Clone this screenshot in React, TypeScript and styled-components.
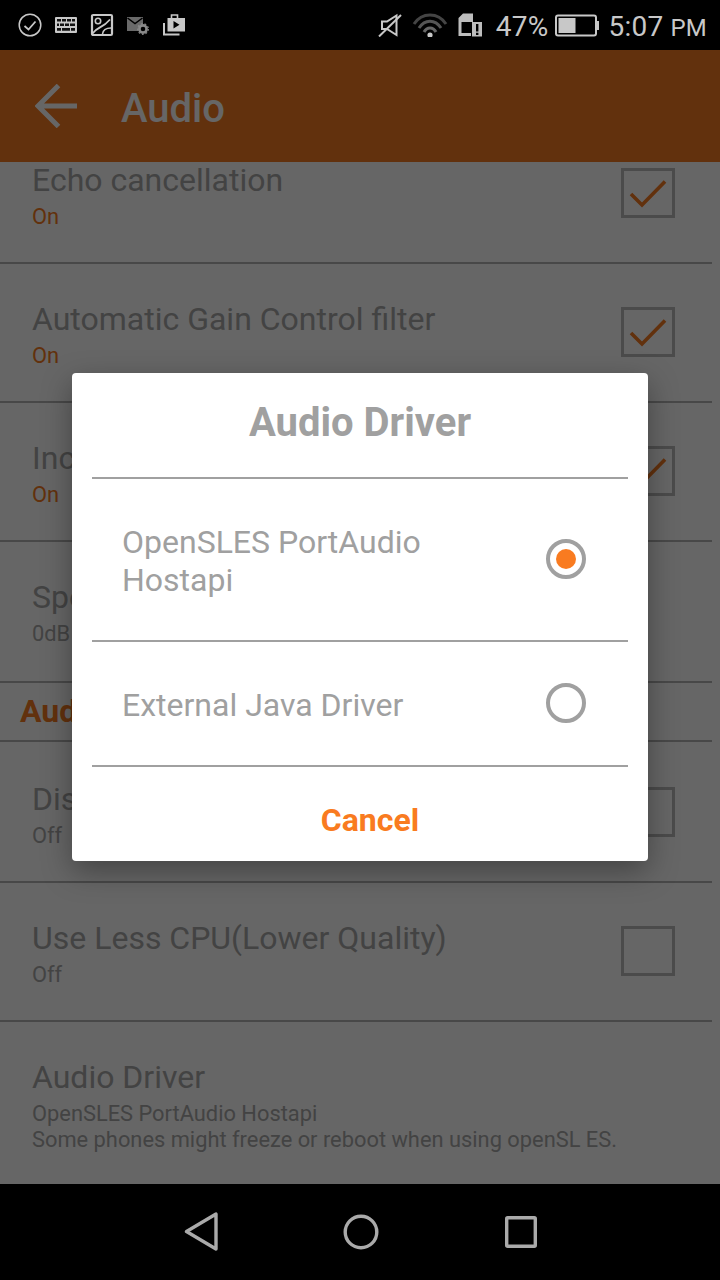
import React from "react";
import styled, { createGlobalStyle } from "styled-components";

const Global = createGlobalStyle`
  html, body { margin: 0; padding: 0; background: #000; }
  body { font-family: Roboto, "Liberation Sans", sans-serif; }
  * { box-sizing: border-box; }
`;

const Screen = styled.div`
  width: 720px;
  height: 1280px;
  display: flex;
  flex-direction: column;
  overflow: hidden;
  background: #000;
`;

const StatusBar = styled.div`
  height: 50px;
  flex: none;
  display: flex;
  align-items: center;
  justify-content: space-between;
  padding: 0 13px 0 18px;
  background: #000;
  color: #c8c8c8;
`;

const StatusGroup = styled.div<{ $gap: number }>`
  display: flex;
  align-items: center;
  gap: ${(p) => p.$gap}px;
`;

const Percent = styled.span`
  font-size: 28px;
  line-height: 32px;
  letter-spacing: 0.3px;
  margin: 4px -5px 0 4px;
`;

const Clock = styled.span`
  font-size: 28px;
  line-height: 32px;
  letter-spacing: 0.2px;
  margin-top: 4px;
  small { font-size: 24px; }
`;

const Content = styled.div`
  position: relative;
  flex: 1;
  display: flex;
  flex-direction: column;
  min-height: 0;
  background: #fff;
`;

const AppBar = styled.div`
  height: 112px;
  flex: none;
  display: flex;
  align-items: center;
  gap: 44px;
  padding: 0 0 0 35px;
  background: #f57a22;
  color: #fff;
`;

const AppTitle = styled.div`
  font-size: 40px;
  font-weight: 500;
  padding-top: 4px;
`;

const ListViewport = styled.div`
  flex: 1;
  min-height: 0;
  overflow: hidden;
`;

const List = styled.div`
  margin-top: -37px;
  width: 712px;
`;

const Row = styled.div<{ $height: number; $top?: number }>`
  height: ${(p) => p.$height}px;
  border-bottom: 2px solid #b4b4b4;
  padding: ${(p) => p.$top ?? 36}px 37px 0 32px;
  display: flex;
  justify-content: space-between;
`;

const RowText = styled.div`
  display: flex;
  flex-direction: column;
  gap: 5px;
`;

const RowTitle = styled.div`
  font-size: 32px;
  line-height: 38px;
  color: #a8a8a8;
`;

const RowSummary = styled.div<{ $on?: boolean }>`
  font-size: 21.85px;
  line-height: 26px;
  color: ${(p) => (p.$on ? "#f57a22" : "#a8a8a8")};
`;

const CheckBox = styled.div`
  width: 54px;
  height: 50px;
  margin-top: 7px;
  border: 3px solid #bcbcbc;
  flex: none;
  svg { display: block; margin: -3px; }
`;

const Section = styled.div`
  height: 59px;
  border-bottom: 2px solid #b4b4b4;
  padding: 9px 0 0 20px;
  font-size: 32px;
  line-height: 38px;
  font-weight: 700;
  color: #f57a22;
`;

const Scrim = styled.div`
  position: absolute;
  inset: 0;
  display: flex;
  align-items: center;
  justify-content: center;
  background: rgba(0, 0, 0, 0.6);
`;

const Dialog = styled.div`
  width: 576px;
  height: 488px;
  background: #fff;
  border-radius: 4px;
  padding: 0 20px;
  display: flex;
  flex-direction: column;
  box-shadow: 0 10px 30px rgba(0, 0, 0, 0.35);
`;

const DialogTitle = styled.div`
  height: 106px;
  flex: none;
  display: flex;
  align-items: center;
  justify-content: center;
  padding-bottom: 5px;
  border-bottom: 2px solid #a0a0a0;
  font-size: 40px;
  font-weight: 700;
  color: #a0a0a0;
`;

const Option = styled.div<{ $height: number }>`
  height: ${(p) => p.$height}px;
  flex: none;
  display: flex;
  align-items: center;
  justify-content: space-between;
  padding: 0 42px 0 30px;
  border-bottom: 2px solid #a0a0a0;
`;

const OptionLabel = styled.div`
  width: 340px;
  padding-top: 2px;
  font-size: 32px;
  line-height: 38px;
  color: #a0a0a0;
`;

const Radio = styled.div<{ $checked?: boolean }>`
  width: 40px;
  height: 40px;
  flex: none;
  margin-bottom: 2px;
  border-radius: 50%;
  border: 4px solid #a0a0a0;
  display: flex;
  align-items: center;
  justify-content: center;
  &::after {
    content: "";
    width: 20px;
    height: 20px;
    border-radius: 50%;
    background: ${(p) => (p.$checked ? "#f97b20" : "transparent")};
  }
`;

const CancelRow = styled.div`
  flex: 1;
  display: flex;
  align-items: center;
  justify-content: center;
  padding: 12px 0 0 20px;
  font-size: 32px;
  font-weight: 700;
  color: #f97b20;
`;

const NavBar = styled.div`
  height: 96px;
  flex: none;
  display: flex;
  align-items: center;
  justify-content: center;
  gap: 120px;
  padding: 0 0 0 2px;
  background: #000;
`;

const Check = () => (
  <svg width="54" height="50" viewBox="0 0 54 50" fill="none">
    <path d="M10 26 L21 37 L44 13.5" stroke="#f57a22" strokeWidth="3.6" />
  </svg>
);

const s = "#c8c8c8";

const IconCheck = () => (
  <svg width="24" height="24" viewBox="0 0 24 24" fill="none" stroke={s}>
    <circle cx="12" cy="12" r="10.8" strokeWidth="1.5" />
    <path d="M6.5 13 L10.5 16.5 L17.5 8.5" strokeWidth="1.8" />
  </svg>
);

const IconKeyboard = () => (
  <svg width="24" height="24" viewBox="0 0 24 24">
    <rect x="1" y="4" width="22" height="16" rx="1" fill={s} />
    <path
      d="M3 6h4v2.5H3zM8 6h4v2.5H8zM13 6h4v2.5h-4zM18 6h3v2.5h-3zM3 10.5h2v2.5H3zM6 10.5h4v2.5H6zM11 10.5h4v2.5h-4zM16 10.5h5v2.5h-5zM3 15h4v2.8H3zM8 15h8v2.8H8zM17 15h4v2.8h-4z"
      fill="#111"
    />
  </svg>
);

const IconImage = () => (
  <svg width="24" height="24" viewBox="0 0 24 24" fill="none" stroke={s}>
    <rect x="2" y="2" width="20" height="20" rx="1.2" strokeWidth="2.2" />
    <circle cx="8" cy="8" r="2.7" strokeWidth="1.6" />
    <path d="M2.5 20.5 C8 13 12 16 20 6.5" strokeWidth="1.8" />
    <path d="M12.5 21 C13 17 15.5 15 21 15" strokeWidth="1.6" />
  </svg>
);

const IconMailGear = () => (
  <svg width="24" height="24" viewBox="0 0 24 24" fill="none">
    <path d="M1 4H17V10.5L12.5 18H1Z" fill="#6a6a6a" />
    <path d="M1.5 5L9 10.5L16.5 5" stroke="#000" strokeWidth="1.5" />
    <circle cx="17" cy="16" r="3.6" stroke="#8a8a8a" strokeWidth="2.6" />
    <circle cx="17" cy="16" r="5.3" stroke="#8a8a8a" strokeWidth="1.2" strokeDasharray="1.8 1.9" />
  </svg>
);

const IconPlay = () => (
  <svg width="24" height="24" viewBox="0 0 24 24" fill="none">
    <path d="M2 10V21.5H17.5" stroke={s} strokeWidth="2" />
    <path d="M9.5 5V2H15.5V5" stroke={s} strokeWidth="1.6" />
    <path fillRule="evenodd" d="M5.5 5H23V18.5H5.5ZM11.5 8V15.5L17.5 11.7Z" fill={s} />
  </svg>
);

const IconMute = () => (
  <svg width="24" height="24" viewBox="0 0 24 24" fill="none" stroke={s}>
    <path d="M4 8.5H9L18.5 2.5V22L9 16H4Z" strokeWidth="2" />
    <path d="M1 23.5L23 2" strokeWidth="2" />
  </svg>
);

const IconWifi = () => (
  <svg width="36" height="24" viewBox="0 0 36 24" fill="none">
    <path d="M2 11C10 -1 26 -1 34 11" stroke="#444" strokeWidth="3" />
    <path d="M7 15C13 6 23 6 29 15" stroke="#555" strokeWidth="3" />
    <path d="M12 19C15 13.5 21 13.5 24 19" stroke="#666" strokeWidth="3" />
    <circle cx="18" cy="22" r="2.6" fill={s} />
  </svg>
);

const IconSd = () => (
  <svg width="24" height="24" viewBox="0 0 24 24">
    <path d="M0.5 23V5L5 0.5H15V9H3.5V20H13V23Z" fill="#bdbdbd" />
    <rect x="14" y="9" width="10" height="14.5" fill="#bdbdbd" />
    <path d="M18 11H20.4V18.5H18ZM18 19.8H20.4V22H18Z" fill="#000" />
  </svg>
);

const IconBattery = () => (
  <svg width="45" height="24" viewBox="0 0 45 24" fill="none">
    <rect x="2" y="2.5" width="40" height="20" rx="2" stroke={s} strokeWidth="2" />
    <rect x="4.5" y="5" width="17" height="15" fill={s} />
    <rect x="43" y="8" width="2" height="9" fill={s} />
  </svg>
);

const ArrowBack = () => (
  <svg width="42" height="44" viewBox="0 0 42 44" fill="none" stroke="#fff" strokeWidth="5">
    <path d="M42 22H3M23.5 1.5L3 22L23.5 42.5" />
  </svg>
);

const NavBack = () => (
  <svg width="40" height="40" viewBox="0 0 40 40" fill="none" stroke="#aaa" strokeWidth="3.4" strokeLinejoin="round">
    <path d="M35 2V37L5.5 19.5Z" />
  </svg>
);

const NavHome = () => (
  <svg width="40" height="40" viewBox="0 0 40 40" fill="none" stroke="#aaa" strokeWidth="3.4">
    <circle cx="20" cy="20" r="15.8" />
  </svg>
);

const NavRecent = () => (
  <svg width="40" height="40" viewBox="0 0 40 40" fill="none" stroke="#aaa" strokeWidth="3.4" strokeLinejoin="round">
    <rect x="5.7" y="5.7" width="28.6" height="28.6" rx="1" />
  </svg>
);

type Pref = { title: string; summary: string; on?: boolean; checked?: boolean; box?: boolean; height: number; top?: number };

const upper: Pref[] = [
  { title: "Echo cancellation", summary: "On", on: true, checked: true, box: true, height: 139 },
  { title: "Automatic Gain Control filter", summary: "On", on: true, checked: true, box: true, height: 139 },
  { title: "Increase volume", summary: "On", on: true, checked: true, box: true, height: 139 },
  { title: "Speaker gain", summary: "0dB", height: 141 },
];

const lower: Pref[] = [
  { title: "Disable audio", summary: "Off", box: true, height: 141, top: 38 },
  { title: "Use Less CPU(Lower Quality)", summary: "Off", box: true, height: 139 },
];

const PrefRow = ({ title, summary, on, checked, box, height, top }: Pref) => (
  <Row $height={height} $top={top}>
    <RowText>
      <RowTitle>{title}</RowTitle>
      <RowSummary $on={on}>{summary}</RowSummary>
    </RowText>
    {box && <CheckBox>{checked && <Check />}</CheckBox>}
  </Row>
);

export default function App() {
  return (
    <Screen>
      <Global />
      <StatusBar>
        <StatusGroup $gap={12}>
          <IconCheck />
          <IconKeyboard />
          <IconImage />
          <IconMailGear />
          <IconPlay />
        </StatusGroup>
        <StatusGroup $gap={10}>
          <IconMute />
          <IconWifi />
          <IconSd />
          <Percent>47%</Percent>
          <IconBattery />
          <Clock>
            5:07 <small>PM</small>
          </Clock>
        </StatusGroup>
      </StatusBar>
      <Content>
        <AppBar>
          <ArrowBack />
          <AppTitle>Audio</AppTitle>
        </AppBar>
        <ListViewport>
          <List>
            {upper.map((p) => (
              <PrefRow key={p.title} {...p} />
            ))}
            <Section>Audio Settings</Section>
            {lower.map((p) => (
              <PrefRow key={p.title} {...p} />
            ))}
            <Row $height={200}>
              <RowText>
                <RowTitle>Audio Driver</RowTitle>
                <RowSummary>
                  OpenSLES PortAudio Hostapi
                  <br />
                  Some phones might freeze or reboot when using openSL ES.
                </RowSummary>
              </RowText>
            </Row>
          </List>
        </ListViewport>
        <Scrim>
          <Dialog>
            <DialogTitle>Audio Driver</DialogTitle>
            <Option $height={163}>
              <OptionLabel>OpenSLES PortAudio Hostapi</OptionLabel>
              <Radio $checked />
            </Option>
            <Option $height={125}>
              <OptionLabel>External Java Driver</OptionLabel>
              <Radio />
            </Option>
            <CancelRow>Cancel</CancelRow>
          </Dialog>
        </Scrim>
      </Content>
      <NavBar>
        <NavBack />
        <NavHome />
        <NavRecent />
      </NavBar>
    </Screen>
  );
}
